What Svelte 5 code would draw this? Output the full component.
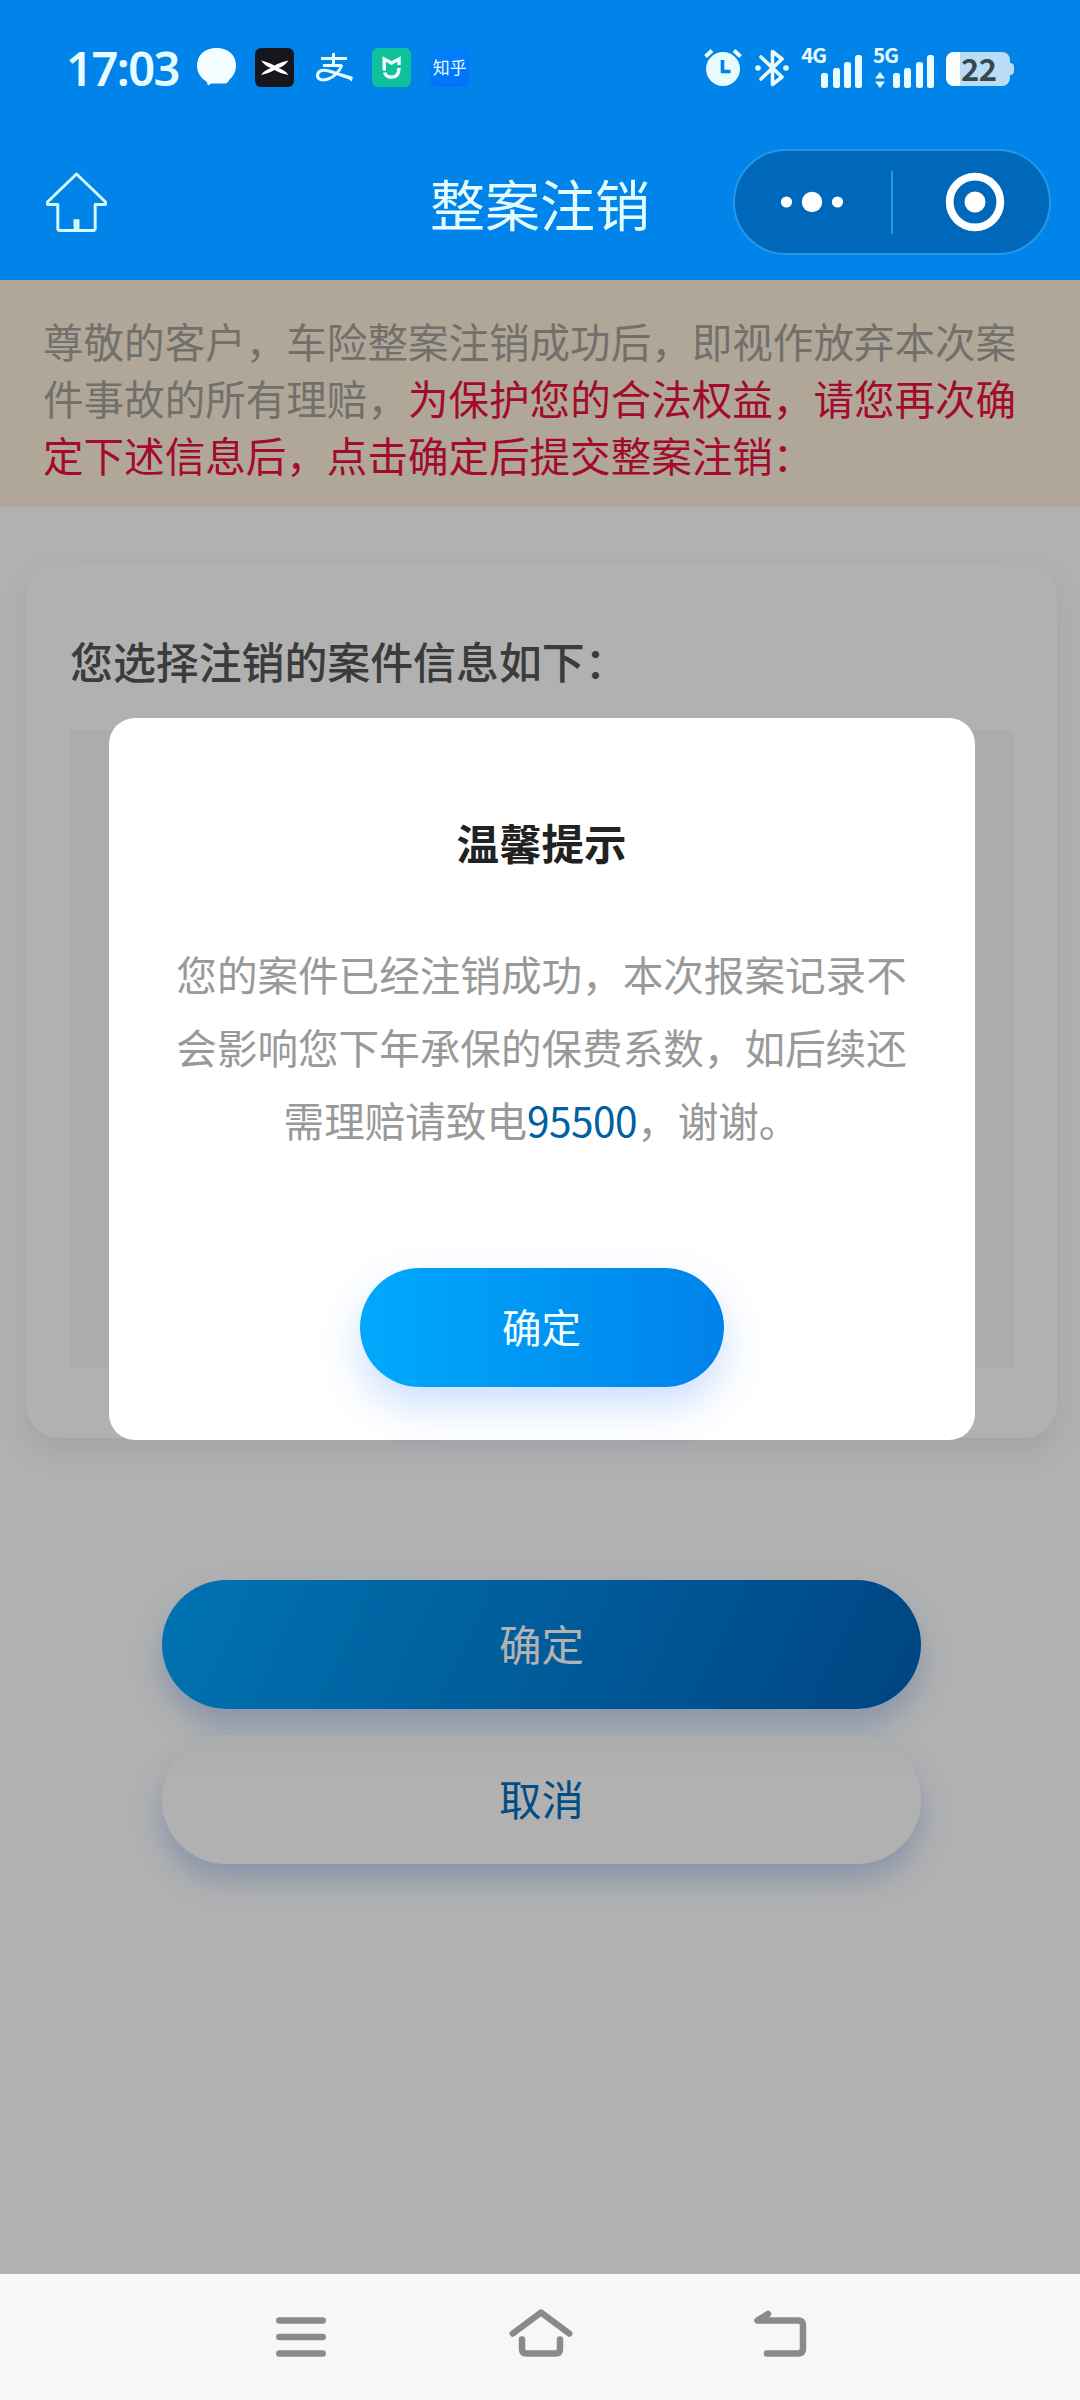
<script>
	let { time = '17:03', battery = 22, hotline = '95500' } = $props();

	/** Bar heights of a full-strength signal icon. */
	const signalBars = [15, 20, 26, 33];

	const networks = [
		{ name: '4G', active: false },
		{ name: '5G', active: true }
	];
</script>

<div class="screen">
	<header class="header">
		<div class="status">
			<span class="status-time">{time}</span>
			<div class="status-apps">
				<svg class="app-icon" viewBox="0 0 39 39">
					<path
						d="M19.500 0C8 0 0 7 0 17.500c0 6 2.500 10 6 13.500 1.500 1.500 4 2.500 4 3.500L11 37.500l3.500-2H28c1.500 0 3.500-1.500 4.500-4C36.500 28 39 23.500 39 17.500 39 7 31 0 19.500 0z"
						fill="#f4fdff"
					/>
				</svg>
				<svg class="app-icon" viewBox="0 0 39 39">
					<rect width="39" height="39" rx="6" fill="#15171c" />
					<path
						d="M6 12.500C11 13.500 16 15.500 19.500 17.500 23 15.500 28 13.500 33.500 12.500 30.500 16.500 27 19 23.500 20c3.500 1 7 3 10 7-5.500-1-10.500-3-14-5-3.500 2-8.500 4-13.500 5C9 23 12.500 21 16 20 12.500 19 9 16.500 6 12.500z"
						fill="#fff"
					/>
				</svg>
				<svg class="app-icon" viewBox="0 0 39 39">
					<g fill="none" stroke="#e8fbff" stroke-width="3">
						<path d="M7 10.500h26M19.500 5v12M9 17.500h19" />
						<path d="M28 17c-3 7-8 12-14 14-6 2-10.500.5-10.500-3.500 0-4 4-6 9-5 8 1.500 15 5.500 26 8" />
					</g>
					<path d="M26 25l12 3.500v5z" fill="#e8fbff" />
				</svg>
				<svg class="app-icon" viewBox="0 0 39 39">
					<rect width="39" height="39" rx="6" fill="#0fc19a" />
					<g fill="none" stroke="#f2fffb" stroke-width="3.400">
						<path d="M12.200 22.500V11l7.300 4L27 11v6" />
						<path d="M12.500 24.500c1.200 3.200 3.500 4.700 7 4.700 4.700 0 7.500-3 7.500-9.200" />
					</g>
				</svg>
				<span class="app-icon app-zhihu">知乎</span>
			</div>

			<div class="status-system">
				<svg class="alarm" viewBox="0 0 38 38">
					<circle cx="19" cy="20" r="17" fill="#e8fbff" />
					<path d="M1.500 7.500L8 1.500M36.500 7.500L30 1.500" stroke="#e8fbff" stroke-width="4" />
					<path d="M18.500 11v11.500h8" fill="none" stroke="#0084e9" stroke-width="3.600" />
				</svg>
				<svg class="bluetooth" viewBox="0 0 34 38">
					<path
						d="M6 8l21 20-9.500 7.500v-33L27 10 6 30"
						fill="none"
						stroke="#e8fbff"
						stroke-width="3.600"
						stroke-linejoin="round"
						stroke-linecap="round"
					/>
					<circle cx="3" cy="19" r="2.800" fill="#e8fbff" />
					<circle cx="31" cy="19" r="2.800" fill="#e8fbff" />
				</svg>
				{#each networks as network}
					<div class="network">
						<div class="network-label">
							<span>{network.name}</span>
							{#if network.active}
								<svg class="traffic" viewBox="0 0 10 16">
									<path d="M5 0l5 6.500H0zM5 16l5-6.500H0z" fill="#e8fbff" />
								</svg>
							{/if}
						</div>
						<div class="bars">
							{#each signalBars as height}
								<i style="height: {height}px"></i>
							{/each}
						</div>
					</div>
				{/each}
				<div class="battery">
					<div class="battery-body">
						<div class="battery-fill" style="width: {battery}%"></div>
						<span class="battery-value">{battery}</span>
					</div>
					<div class="battery-tip"></div>
				</div>
			</div>
		</div>

		<div class="nav">
			<svg class="nav-home" viewBox="0 0 64 62">
				<path
					d="M32 2L2.500 30.500v2.500H13v24.500a2 2 0 0 0 2 2h34a2 2 0 0 0 2-2V33h10.500v-2.500z"
					fill="none"
					stroke="#d6f8ff"
					stroke-width="3"
					stroke-linejoin="round"
				/>
				<path d="M32 48v11" stroke="#d6f8ff" stroke-width="6" />
			</svg>
			<h1 class="nav-title">整案注销</h1>
			<div class="capsule">
				<div class="capsule-half capsule-half--menu">
					<svg class="dots" viewBox="0 0 64 22">
						<circle cx="6.500" cy="11" r="5.600" fill="#fff" />
						<circle cx="32" cy="11" r="10.200" fill="#fff" />
						<circle cx="57.500" cy="11" r="5.600" fill="#fff" />
					</svg>
				</div>
				<div class="capsule-divider"></div>
				<div class="capsule-half capsule-half--close">
					<svg class="target" viewBox="0 0 60 60">
						<circle cx="30" cy="30" r="25.300" fill="none" stroke="#fff" stroke-width="7.800" />
						<circle cx="30" cy="30" r="10.500" fill="#fff" />
					</svg>
				</div>
			</div>
		</div>
	</header>

	<main class="page">
		<p class="notice">
			尊敬的客户，车险整案注销成功后，即视作放弃本次案件事故的所有理赔，<em
				>为保护您的合法权益，请您再次确定下述信息后，点击确定后提交整案注销：</em
			>
		</p>

		<section class="card">
			<h2 class="card-title">您选择注销的案件信息如下：</h2>
			<div class="card-info"></div>
		</section>

		<div class="actions">
			<button class="action action--primary">确定</button>
			<button class="action action--plain">取消</button>
		</div>

		<div class="mask">
			<div class="dialog" role="dialog" aria-modal="true">
				<h3 class="dialog-title">温馨提示</h3>
				<p class="dialog-text">
					您的案件已经注销成功，本次报案记录不会影响您下年承保的保费系数，如后续还需理赔请致电<span
						class="dialog-phone">{hotline}</span
					>，谢谢。
				</p>
				<button class="dialog-button">确定</button>
			</div>
		</div>
	</main>

	<footer class="system-nav">
		<svg viewBox="0 0 60 60">
			<path d="M8.300 14.500h43.400M8.300 31h43.400M8.300 47.500h43.400" />
		</svg>
		<svg viewBox="0 0 60 60">
			<path d="M1.800 27.500L30 6.500l28.200 21" />
			<path d="M11 33.500v9.500q0 4.500 4.500 4.500h29q4.500 0 4.500-4.500v-9.500" />
		</svg>
		<svg viewBox="0 0 60 60">
			<path d="M17 8L6.500 14.500H47q5 0 5 5v23q0 5-5 5H16" />
		</svg>
	</footer>
</div>

<style>
	:global(body) {
		margin: 0;
	}

	.screen {
		display: flex;
		flex-direction: column;
		width: 1080px;
		height: 2400px;
		overflow: hidden;
		font-family: 'Noto Sans CJK SC', 'Noto Sans', sans-serif;
		background: #fff;
	}

	h1,
	h2,
	h3,
	p {
		margin: 0;
	}

	button {
		display: block;
		padding: 0 0 3px;
		border: 0;
		font-family: inherit;
	}

	svg {
		display: block;
		flex: none;
	}

	/* Header */

	.header {
		flex: none;
		height: 280px;
		background: #0084ea;
	}

	.status {
		display: flex;
		align-items: center;
		height: 135px;
		padding: 0 66px;
		box-sizing: border-box;
	}

	.status-time {
		width: 131px;
		font-family: 'Noto Sans', sans-serif;
		font-size: 47px;
		font-weight: 600;
		line-height: 58px;
		letter-spacing: -1.500px;
		color: #e8fbff;
	}

	.status-apps {
		display: flex;
		gap: 19.300px;
	}

	.app-icon {
		width: 39px;
		height: 39px;
	}

	.app-zhihu {
		border-radius: 6px;
		background: linear-gradient(160deg, #0083f5, #0070ff);
		color: #e8fbff;
		font-size: 17px;
		line-height: 38px;
		text-align: center;
	}

	.status-system {
		display: flex;
		align-items: center;
		margin-left: auto;
	}

	.alarm {
		width: 38px;
		height: 38px;
		margin-right: 13px;
	}

	.bluetooth {
		width: 34px;
		height: 38px;
		margin-right: 12px;
	}

	.network {
		display: flex;
		align-items: flex-end;
		height: 41px;
		margin-right: 11px;
	}

	.network-label {
		display: flex;
		flex-direction: column;
		align-items: flex-start;
		width: 20px;
		height: 41px;
		color: #e8fbff;
		font-size: 20.500px;
		font-weight: 700;
		line-height: 15px;
		letter-spacing: -1px;
	}

	.traffic {
		width: 10px;
		height: 16px;
		margin: 10px 0 0 2px;
	}

	.bars {
		display: flex;
		align-items: flex-end;
		gap: 4.300px;
	}

	.bars i {
		width: 7px;
		border-radius: 2.500px;
		background: #e8fbff;
	}

	.battery {
		display: flex;
		align-items: center;
		margin: 3px 0 0 1px;
	}

	.battery-body {
		position: relative;
		width: 64px;
		height: 34px;
		border-radius: 8px;
		background: #bbdcf7;
	}

	.battery-fill {
		height: 100%;
		border-radius: 8px 0 0 8px;
		background: #fbffff;
	}

	.battery-value {
		position: absolute;
		top: -2px;
		left: 15px;
		color: #37474f;
		font-size: 31px;
		font-weight: 700;
		line-height: 35px;
		letter-spacing: -0.500px;
	}

	.battery-tip {
		width: 4px;
		height: 12px;
		border-radius: 0 4px 4px 0;
		background: #bbdcf7;
	}

	.nav {
		display: grid;
		grid-template-columns: 1fr auto 1fr;
		align-items: center;
		height: 134px;
		padding: 0 29px 0 45px;
	}

	.nav-home {
		width: 63px;
		height: 61px;
	}

	.nav-title {
		margin: -1px 16px 0 0;
		color: #e2fcff;
		font-size: 55px;
		font-weight: 400;
		line-height: 80px;
	}

	.capsule {
		display: flex;
		align-items: center;
		justify-self: end;
		width: 318px;
		height: 106px;
		box-sizing: border-box;
		border: 2px solid #2597e7;
		border-radius: 53px;
		background: #0068bb;
	}

	.capsule-half {
		display: flex;
		flex: none;
		justify-content: center;
		box-sizing: border-box;
	}

	.capsule-half--menu {
		width: 156px;
		padding-right: 2px;
	}

	.capsule-half--close {
		width: 156px;
		padding-left: 7px;
	}

	.capsule-divider {
		flex: none;
		width: 2px;
		height: 63px;
		background: #2597e7;
	}

	.dots {
		width: 64px;
		height: 22px;
	}

	.target {
		width: 60px;
		height: 60px;
	}

	/* Page under the mask */

	.page {
		position: relative;
		flex: 1;
		background: #fefefe;
	}

	.notice {
		height: 227px;
		padding: 32px 58px 0 43px;
		box-sizing: border-box;
		background: #fef0dc;
		color: #a3a19a;
		font-size: 40.560px;
		line-height: 57px;
	}

	.notice em {
		color: #ea1040;
		font-style: normal;
	}

	.card {
		height: 875px;
		margin: 56px 23px 0 26px;
		padding: 65px 44px 70px;
		box-sizing: border-box;
		border-radius: 34px;
		background: #fefefe;
		box-shadow: 0 14px 30px rgba(70, 80, 130, 0.12);
	}

	.card-title {
		height: 102px;
		color: #555;
		font-size: 42.900px;
		font-weight: 500;
		line-height: 64px;
	}

	.card-info {
		height: 638px;
		background: #f7f7f7;
	}

	.actions {
		display: flex;
		flex-direction: column;
		align-items: center;
		gap: 26px;
		margin-top: 142px;
		padding-left: 3px;
	}

	.action {
		width: 759px;
		height: 129px;
		border-radius: 65px;
		font-size: 42.500px;
		line-height: 64px;
		box-shadow: 0 16px 30px rgba(60, 120, 220, 0.3);
	}

	.action--primary {
		background: linear-gradient(115deg, #00a6ff, #0062bb);
		color: #fff;
	}

	.action--plain {
		background: linear-gradient(#f6f6f8, #fefefe 30%);
		color: #0070c0;
	}

	/* Dialog */

	.mask {
		position: absolute;
		inset: 0;
		display: flex;
		align-items: flex-start;
		justify-content: center;
		padding: 438px 0 0 3px;
		background: rgba(0, 0, 0, 0.3);
	}

	.dialog {
		display: flex;
		flex-direction: column;
		align-items: center;
		width: 866px;
		height: 722px;
		border-radius: 26px;
		background: #fff;
	}

	.dialog-title {
		margin-top: 92px;
		color: #222;
		font-size: 42.500px;
		font-weight: 700;
		line-height: 64px;
	}

	.dialog-text {
		width: 734px;
		margin-top: 63px;
		color: #999;
		font-size: 40.600px;
		line-height: 73px;
		text-align: center;
	}

	.dialog-phone {
		color: #0060a0;
		letter-spacing: -0.500px;
	}

	.dialog-button {
		width: 364px;
		height: 119px;
		margin-top: 112px;
		border-radius: 60px;
		background: linear-gradient(90deg, #00a9fc, #0082ea);
		box-shadow: 0 18px 40px rgba(50, 130, 250, 0.26);
		color: #f2ffff;
		font-size: 39.500px;
		line-height: 60px;
	}

	/* Android navigation */

	.system-nav {
		display: flex;
		flex: none;
		align-items: center;
		justify-content: center;
		gap: 180px;
		height: 126px;
		padding: 0 0 2px 1px;
		box-sizing: border-box;
		background: #f7f7f7;
	}

	.system-nav svg {
		width: 60px;
		height: 60px;
		overflow: visible;
	}

	.system-nav path {
		fill: none;
		stroke: #8a8a8a;
		stroke-width: 6.500;
		stroke-linecap: round;
		stroke-linejoin: round;
	}
</style>
